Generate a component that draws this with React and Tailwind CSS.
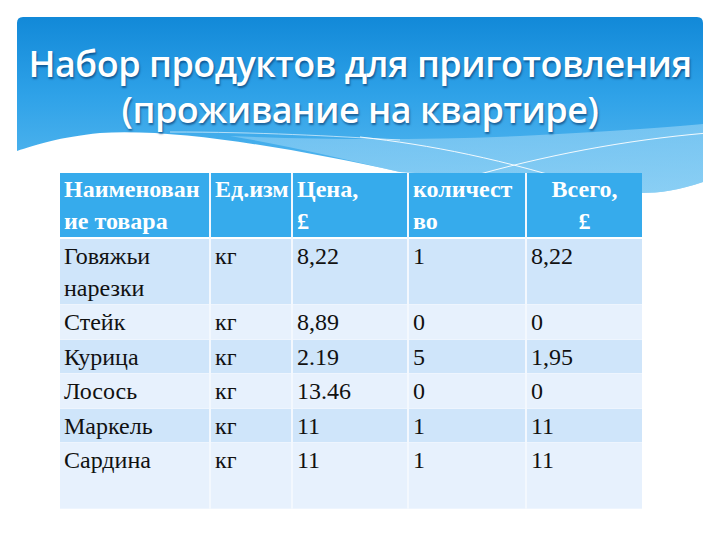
import React from 'react'

const ROWS = [
  { name: ['Говяжьи', 'нарезки'], unit: 'кг', price: '8,22', qty: '1', total: '8,22', h: 'h-[65px]', bg: 'bg-[#cfe5fa]' },
  { name: ['Стейк'], unit: 'кг', price: '8,89', qty: '0', total: '0', h: 'h-[35px]', bg: 'bg-[#e7f1fd]' },
  { name: ['Курица'], unit: 'кг', price: '2.19', qty: '5', total: '1,95', h: 'h-[32px]', bg: 'bg-[#cfe5fa]' },
  { name: ['Лосось'], unit: 'кг', price: '13.46', qty: '0', total: '0', h: 'h-[35px]', bg: 'bg-[#e7f1fd]' },
  { name: ['Маркель'], unit: 'кг', price: '11', qty: '1', total: '11', h: 'h-[31px]', bg: 'bg-[#cfe5fa]' },
  { name: ['Сардина'], unit: 'кг', price: '11', qty: '1', total: '11', h: 'h-[66px]', bg: 'bg-[#e7f1fd]' },
]

function Backdrop() {
  // slide header band with the white wave cut out of its bottom
  return (
    <svg className="absolute inset-0" width="720" height="540" viewBox="0 0 720 540">
      <defs>
        <linearGradient id="band" x1="0" y1="0" x2="0" y2="1">
          <stop offset="0" stopColor="#1289d8" />
          <stop offset="0.45" stopColor="#2fa2e8" />
          <stop offset="1" stopColor="#5cbbf0" />
        </linearGradient>
        <linearGradient id="lite" x1="0" y1="0" x2="1" y2="1">
          <stop offset="0" stopColor="#8fd0f5" />
          <stop offset="1" stopColor="#a9dcf7" />
        </linearGradient>
      </defs>
      <path
        d="M17,151 L17,23 Q17,17 23,17 L697,17 Q703,17 703,23 L703,182 C680,190 660,193 640,193 C560,186 470,176 400,172 C300,150 180,128 100,133 C60,137 35,145 17,151 Z"
        fill="url(#band)"
      />
      <path
        d="M230,136 C330,140 420,140 520,136 C600,132 660,128 703,124 L703,182 C680,190 660,193 640,193 C560,186 470,176 400,172 C340,158 280,144 230,136 Z"
        fill="url(#lite)"
        opacity="0.6"
      />
      <path d="M360,137 C430,145 500,158 600,190" stroke="#ffffff" strokeWidth="1" fill="none" opacity="0.9" />
      <path d="M480,174 C560,152 640,138 720,132" stroke="#ffffff" strokeWidth="1" fill="none" opacity="0.9" />
      <path d="M170,132 C260,132 330,136 400,140" stroke="#ffffff" strokeWidth="1" fill="none" opacity="0.6" />
    </svg>
  )
}

export default function App() {
  const cell = 'align-top px-[4px] border-r-2 border-[#f3f8fe] last:border-r-0'
  return (
    <div className="relative w-[720px] h-[540px] bg-white overflow-hidden">
      <Backdrop />

      <div className="relative pt-[41px] text-center text-white font-['Open_Sans',sans-serif] font-semibold text-[36px] leading-[46px] tracking-[-0.5px] [text-shadow:1px_2px_2px_rgba(0,40,90,0.55)]">
        <p>Набор продуктов для приготовления</p>
        <p>(проживание на квартире)</p>
      </div>

      <table className="relative ml-[60px] mt-[40px] w-[582px] table-fixed border-collapse font-['Liberation_Serif',serif] text-[24px] leading-[32px]">
        <colgroup>
          <col className="w-[150px]" />
          <col className="w-[82px]" />
          <col className="w-[116px]" />
          <col className="w-[118px]" />
          <col className="w-[116px]" />
        </colgroup>
        <thead>
          <tr className="h-[65px] bg-[#36abec] text-white border-b-2 border-white">
            <th className={`${cell} text-left font-bold`}>Наименован<br />ие товара</th>
            <th className={`${cell} text-left font-bold`}>Ед.изм</th>
            <th className={`${cell} text-left font-bold`}>Цена,<br />£</th>
            <th className={`${cell} text-left font-bold`}>количест<br />во</th>
            <th className={`${cell} text-center font-bold`}>Всего,<br />£</th>
          </tr>
        </thead>
        <tbody className="text-[#111]">
          {ROWS.map((r) => (
            <tr key={r.name[0]} className={`${r.h} ${r.bg} border-b border-[#eef5fe]`}>
              <td className={`${cell} pt-[1px]`}>
                {r.name.map((n) => (
                  <div key={n}>{n}</div>
                ))}
              </td>
              <td className={`${cell} pt-[1px]`}>{r.unit}</td>
              <td className={`${cell} pt-[1px]`}>{r.price}</td>
              <td className={`${cell} pt-[1px]`}>{r.qty}</td>
              <td className={`${cell} pt-[1px]`}>{r.total}</td>
            </tr>
          ))}
        </tbody>
      </table>
    </div>
  )
}
